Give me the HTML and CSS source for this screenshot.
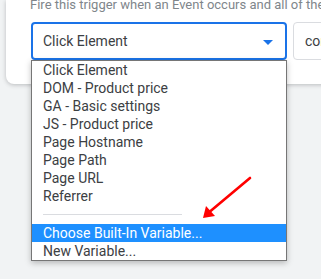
FILE: index.html
```html
<!DOCTYPE html>
<html lang="en">
<head>
    <meta charset="UTF-8">
    <title>Trigger condition</title>
    <link rel="stylesheet" href="styles.css">
</head>
<body>
    <div class="card">
        <p class="hint">Fire this trigger when an Event occurs and all of these conditions are true</p>
        <div class="condition">
            <div class="picker">
                <div class="select focused">
                    <span>Click Element</span>
                    <span class="caret"></span>
                </div>
                <div class="listbox">
                    <div class="option">Click Element</div>
                    <div class="option">DOM - Product price</div>
                    <div class="option">GA - Basic settings</div>
                    <div class="option">JS - Product price</div>
                    <div class="option">Page Hostname</div>
                    <div class="option">Page Path</div>
                    <div class="option">Page URL</div>
                    <div class="option">Referrer</div>
                    <div class="divider"><span></span></div>
                    <div class="option selected">Choose Built-In Variable...</div>
                    <div class="option">New Variable...</div>
                </div>
            </div>
            <div class="select operator"><span>contains</span></div>
        </div>
    </div>

    <svg class="pointer" width="321" height="279" viewBox="0 0 321 279">
        <line x1="250" y1="178" x2="207" y2="214" stroke="#ff0000" stroke-width="2.6" stroke-linecap="round"/>
        <polygon points="203,218 206,206 215,216" fill="#ff0000"/>
    </svg>
</body>
</html>
```

FILE: styles.css
```css
body {
    margin: 0;
    height: 279px;
    overflow: hidden;
    background: #f1f3f4;
    font-family: Roboto, "Noto Sans", sans-serif;
}

.card {
    margin-left: 6px;
    width: 360px;
    height: 84px;
    padding-left: 24px;
    box-sizing: border-box;
    background: #fff;
    border-radius: 0 0 8px 8px;
    box-shadow: 0 1px 4px rgba(60, 64, 67, 0.3);
}

.hint {
    margin: 0;
    font-size: 13px;
    line-height: 14px;
    color: #80868b;
    white-space: nowrap;
    overflow: hidden;
    position: relative;
    top: -2px;
}

.condition {
    display: flex;
    gap: 6px;
    margin-top: 8px;
    margin-left: 1px;
}

.picker {
    position: relative;
}

.select {
    height: 38px;
    box-sizing: border-box;
    border: 1px solid #dadce0;
    border-radius: 4px;
    display: flex;
    align-items: center;
    font-size: 14px;
    color: #3c4043;
    background: #fff;
}

.select.focused {
    width: 256px;
    border: 2px solid #1a73e8;
    padding: 0 12px 0 10px;
    justify-content: space-between;
}

.select.operator {
    width: 80px;
    padding-left: 11px;
}

.caret {
    width: 0;
    height: 0;
    border-left: 5px solid transparent;
    border-right: 5px solid transparent;
    border-top: 5px solid #1a73e8;
    margin-top: 2px;
}

.listbox {
    position: absolute;
    top: 38px;
    left: 0;
    width: 256px;
    box-sizing: border-box;
    background: #fff;
    border: 1px solid #767676;
    box-shadow: 0 2px 6px rgba(0, 0, 0, 0.25);
    z-index: 2;
}

.option {
    height: 18px;
    line-height: 18px;
    padding-left: 11px;
    font-size: 14px;
    color: #3c4043;
    white-space: nowrap;
}

.option.selected {
    background: #1e90ff;
    color: #fff;
}

.divider {
    height: 19px;
    padding-left: 11px;
    display: flex;
    align-items: center;
}

.divider span {
    width: 139px;
    height: 1px;
    background: #dadce0;
}

.pointer {
    position: absolute;
    left: 0;
    top: 0;
    z-index: 3;
    pointer-events: none;
}
```
